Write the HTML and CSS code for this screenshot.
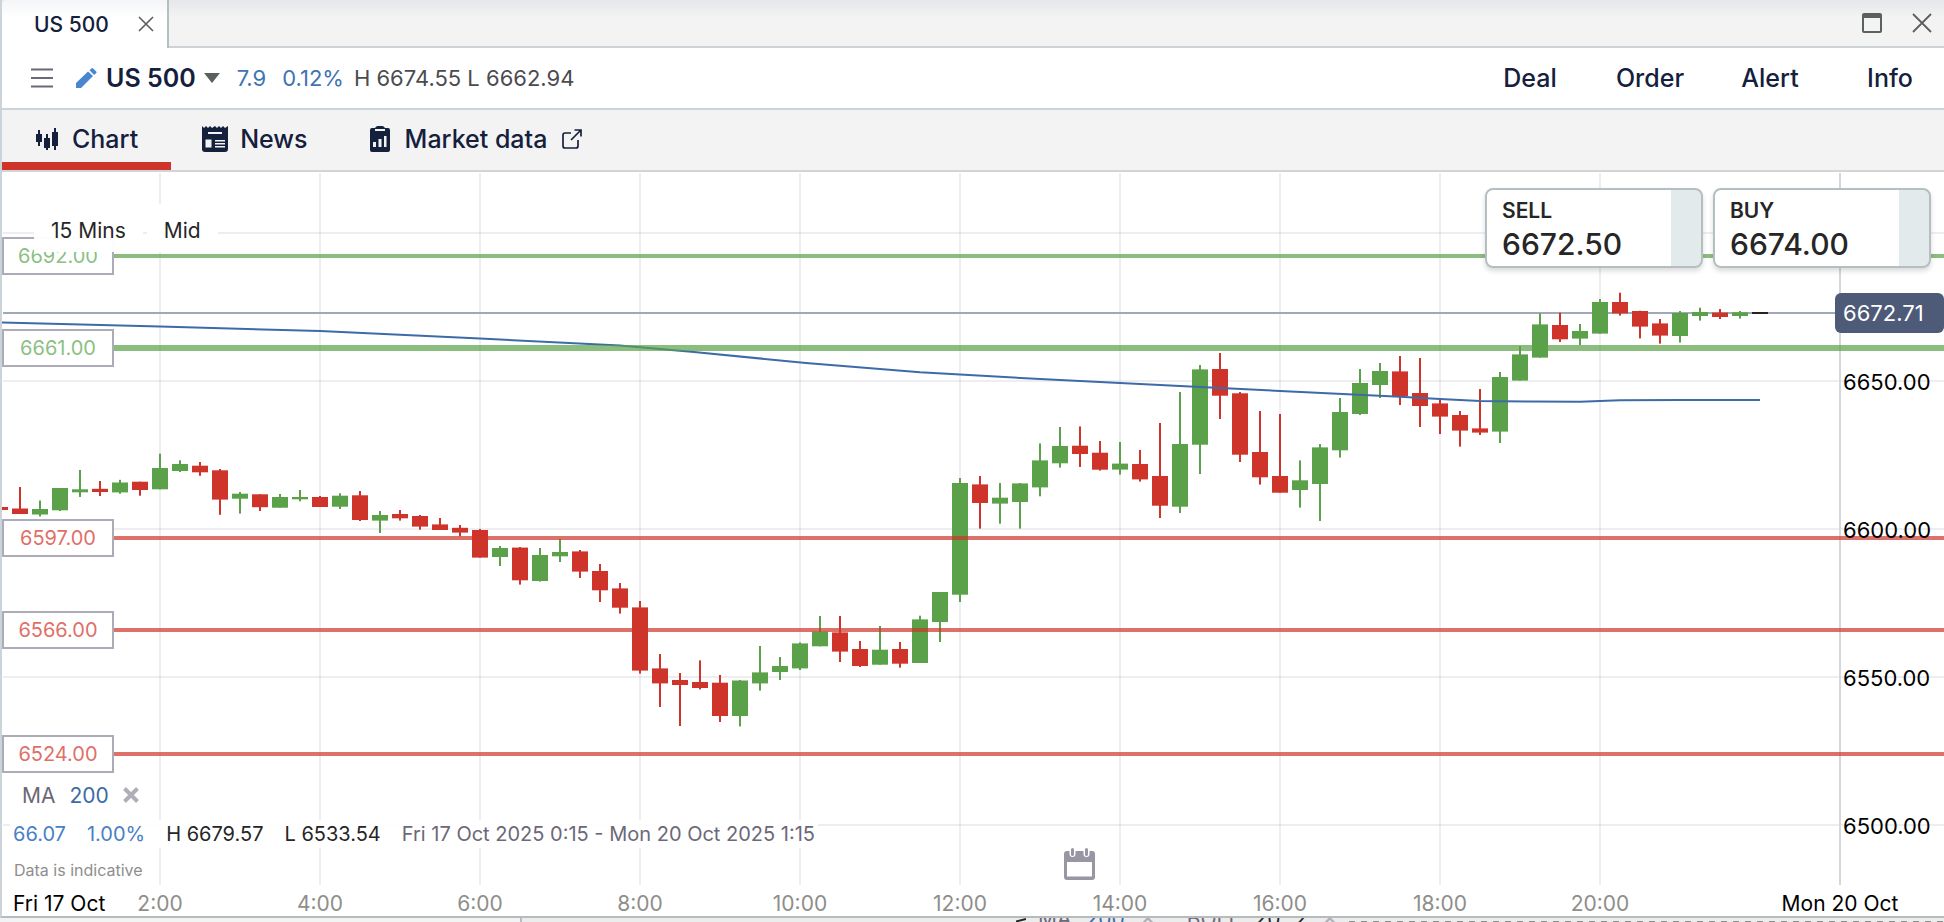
FILE: index.html
```html
<!DOCTYPE html>
<html lang="en">
<head>
    <meta charset="UTF-8">
    <meta name="viewport" content="width=device-width, initial-scale=1.0">
    <title>US 500</title>
    <link rel="stylesheet" href="styles.css">
</head>
<body>
    <div class="window">
        <!-- Window tabs -->
        <div class="titlebar">
            <div class="window-tab">
                <span>US 500</span>
                <button type="button" class="icon-btn" aria-label="Close tab">
                    <svg width="16" height="16" viewBox="0 0 16 16"><path d="M1 1L15 15M15 1L1 15" stroke="#5b5f5e" stroke-width="1.6"/></svg>
                </button>
            </div>
            <div class="window-controls">
                <button type="button" class="icon-btn" aria-label="Maximise">
                    <svg width="20" height="20" viewBox="0 0 20 20"><rect x="1" y="1" width="18" height="18" rx="1" fill="none" stroke="#5b5f5e" stroke-width="2"/><path d="M1 1h18v4H1z" fill="#5b5f5e"/></svg>
                </button>
                <button type="button" class="icon-btn" aria-label="Close window">
                    <svg width="20" height="20" viewBox="0 0 20 20"><path d="M1 1L19 19M19 1L1 19" stroke="#5b5f5e" stroke-width="1.8"/></svg>
                </button>
            </div>
        </div>

        <!-- Market header -->
        <header class="header">
            <button type="button" class="icon-btn menu" aria-label="Menu">
                <svg width="22" height="20" viewBox="0 0 22 20"><path d="M0 1.5h22M0 10h22M0 18.5h22" stroke="#6c6877" stroke-width="2"/></svg>
            </button>
            <button type="button" class="icon-btn pencil" aria-label="Edit">
                <svg width="21" height="20" viewBox="0 0 21 20"><path d="M0 20v-5L12 3.500l5 4.500L5 20zM13.500 2.200L15.500.4q.8-.7 1.700.1l3 2.900q.8.9 0 1.700L18.200 7z" fill="#4a86cf"/></svg>
            </button>
            <button type="button" class="market">US 500
                <svg width="16" height="10" viewBox="0 0 16 10"><path d="M0 0h16L8 10z" fill="#5b5f5e"/></svg>
            </button>
            <span class="change">7.9</span>
            <span class="change">0.12%</span>
            <span class="range">H 6674.55 L 6662.94</span>
            <nav class="actions">
                <button type="button">Deal</button>
                <button type="button">Order</button>
                <button type="button">Alert</button>
                <button type="button">Info</button>
            </nav>
        </header>

        <!-- Sections -->
        <nav class="tabs">
            <a href="#chart" class="tab active">
                <svg width="22" height="22" viewBox="0 0 22 22" fill="#14203c"><path d="M0 6h2V2h2v4h2v8H4v4H2v-4H0zM8 10h2V6h2v4h2v10h-2v2h-2v-2H8zM16 4h2V0h2v4h2v14h-2v4h-2v-4h-2z"/></svg>
                Chart
            </a>
            <a href="#news" class="tab news">
                <svg width="26" height="26" viewBox="0 0 26 26"><path d="M0 0l2 2 2-2 2 2 2-2 2 2 3-2 2 2 2-2 2 2 2-2 2 2 3-2v23q0 3-3 3H3q-3 0-3-3z" fill="#14203c"/><path d="M6 6h14v2H6zM3.500 13.500h6v8h-6zM13 14h10v1.500H13zM13 17h10v1.500H13zM13 20h10v1.500H13z" fill="#f3f3f3"/></svg>
                News
            </a>
            <a href="#market-data" class="tab data">
                <svg width="20" height="26" viewBox="0 0 20 26"><path d="M2 2h3q1-2 3-2h4q2 0 3 2h3q2 0 2 2v20q0 2-2 2H2q-2 0-2-2V4q0-2 2-2z" fill="#14203c"/><path d="M5 3h10v2H5zM3 16h3v5H3zM8.500 13h3v8h-3zM14 10h2.500v11H14z" fill="#f3f3f3"/></svg>
                Market data
                <svg width="20" height="20" viewBox="0 0 20 20"><path d="M9 4H3Q1 4 1 6v11q0 2 2 2h11q2 0 2-2v-6M12.500 1H19v6.500M19 1L9 11" fill="none" stroke="#14203c" stroke-width="1.700"/></svg>
            </a>
        </nav>

        <!-- Chart -->
        <main class="chart" id="chart">
            <svg class="plot" id="plot" viewBox="2 173 1942 712" preserveAspectRatio="none"></svg>
            <div class="labels" id="labels"></div>

            <div class="settings">
                <button type="button">15 Mins</button>
                <button type="button">Mid</button>
            </div>

            <div class="tickets">
                <button type="button" class="ticket"><b>SELL</b><span>6672.50</span></button>
                <button type="button" class="ticket"><b>BUY</b><span>6674.00</span></button>
            </div>

            <div class="legend">
                <div class="study">
                    <span>MA</span>
                    <span class="period">200</span>
                    <button type="button" class="icon-btn" aria-label="Remove MA">
                        <svg width="16" height="16" viewBox="0 0 16 16"><path d="M1.500 1.500L14.500 14.500M14.500 1.500L1.500 14.500" stroke="#b0afb9" stroke-width="4"/></svg>
                    </button>
                </div>
                <div class="stats">
                    <span class="blue">66.07</span>
                    <span class="blue">1.00%</span>
                    <span>H 6679.57</span>
                    <span>L 6533.54</span>
                    <span class="dates">Fri 17 Oct 2025 0:15 - Mon 20 Oct 2025 1:15</span>
                </div>
                <small class="note">Data is indicative</small>
            </div>

            <button type="button" class="icon-btn calendar" aria-label="Pick a date">
                <svg width="31" height="32" viewBox="0 0 31 32"><path d="M3 3h25q3 0 3 3v23q0 3-3 3H3q-3 0-3-3V6q0-3 3-3z" fill="#9896a3"/><path d="M3 14h25v14.500H3z" fill="#fff"/><path d="M8.500 0v6M22.500 0v6" stroke="#fff" stroke-width="6" stroke-linecap="round"/><path d="M8.500 1.500v5M22.500 1.500v5" stroke="#9896a3" stroke-width="3" stroke-linecap="round"/></svg>
            </button>
        </main>

        <div class="time-axis" id="time-axis">
            <span class="day first">Fri 17 Oct</span>
        </div>
    </div>

    <!-- Top edge of the window underneath -->
    <div class="behind">
        <div class="behind-tab"></div>
        <svg class="behind-arrow" width="10" height="4" viewBox="0 0 10 4"><path d="M0 3.500L10 1" stroke="#262626" stroke-width="2"/></svg>
        <div class="behind-studies">
            <span>MA</span><span class="period">200</span><span class="cross">✕</span>
            <span>BOLL</span><span class="dark">20</span><span class="dark">2</span><span class="cross">✕</span>
        </div>
        <div class="behind-line"></div>
    </div>

    <script src="chart.js"></script>
</body>
</html>
```

FILE: styles.css
```css
* {
    box-sizing: border-box;
}
body {
    margin: 0;
    height: 100vh;
    display: flex;
    flex-direction: column;
    overflow: hidden;
    background-color: #ececec;
    color: #14203c;
    font-family: Inter, "Liberation Sans", sans-serif;
    font-size: 21px;
}
button {
    font: inherit;
    color: inherit;
    background: none;
    border: 0;
    padding: 0;
    cursor: pointer;
}
svg {
    display: block;
}
.icon-btn {
    display: flex;
    flex-shrink: 0;
}
.window {
    flex: 1;
    min-height: 0;
    display: flex;
    flex-direction: column;
    background-color: white;
    border-left: 2px solid #cdd4d9;
    border-bottom: 2px solid #b5bcc0;
}

/* Title bar */
.titlebar {
    display: flex;
    justify-content: space-between;
    height: 48px;
    background: linear-gradient(#e6e7ea, #f3f3f3 18px);
    border-bottom: 2px solid #cdd2d7;
}
.window-tab {
    display: flex;
    align-items: center;
    gap: 29px;
    height: 48px;
    padding: 0 13px 0 32px;
    background: linear-gradient(#f4f5f6, white 18px);
    border-right: 2px solid #b5bec0;
    border-top-left-radius: 4px;
    font-weight: 500;
}
.window-controls {
    display: flex;
    align-items: center;
    gap: 30px;
    padding-right: 12px;
}

/* Header */
.header {
    display: flex;
    align-items: center;
    height: 62px;
    padding-left: 29px;
    border-bottom: 2px solid #cdd4d9;
    font-size: 22px;
    white-space: nowrap;
}
.pencil {
    margin: 0 9px 0 23px;
}
.market {
    display: flex;
    align-items: center;
    gap: 8px;
    margin-right: 17px;
    font-size: 25px;
    font-weight: 600;
}
.change {
    margin-right: 16px;
    color: #4173b3;
}
.change + .change {
    margin-right: 10px;
}
.range {
    color: #4b4b50;
}
.actions {
    display: flex;
    margin-left: auto;
    font-size: 25px;
    font-weight: 500;
}
.actions button {
    width: 120px;
}
.actions button:last-child {
    width: 114px;
    padding-left: 6px;
}

/* Tabs */
.tabs {
    display: flex;
    height: 62px;
    background-color: #f3f3f3;
    border-bottom: 2px solid #d3d4da;
    font-size: 25px;
    font-weight: 500;
    white-space: nowrap;
}
.tab {
    display: flex;
    align-items: center;
    gap: 14px;
    padding: 0 31px;
    border-bottom: 8px solid transparent;
    border-top: 6px solid transparent;
    color: inherit;
    text-decoration: none;
}
.tab.active {
    border-bottom-color: #cf342b;
    padding: 0 33px 0 34px;
}
.tab.news {
    gap: 12px;
}
.tab.data {
    gap: 15px;
}

/* Chart */
.chart {
    position: relative;
    flex: 1;
    min-height: 0;
    margin-top: 1px;
}
.plot {
    width: 100%;
    height: 100%;
    position: absolute;
}
.grid {
    fill: #7b7d90;
    fill-opacity: 0.13;
}
.up {
    fill: #5aa149;
}
.down {
    fill: #cf342b;
}
.flat {
    fill: #222;
}
.level-up {
    fill: #5aa149;
    opacity: 0.7;
}
.level-down {
    fill: #cf342b;
    opacity: 0.7;
}
.average {
    fill: none;
    stroke: #3c6ba8;
    stroke-width: 2;
}
.labels {
    position: absolute;
    inset: 0;
}
.price {
    position: absolute;
    right: 0;
    width: 101px;
    transform: translateY(-50%);
    color: black;
    font-size: 22px;
    line-height: 24px;
}
.price.current {
    width: 109px;
    padding-left: 8px;
    line-height: 40px;
    background-color: #4d5b78;
    border-radius: 6px;
    color: white;
}
.level {
    position: absolute;
    left: 0;
    width: 112px;
    transform: translateY(-50%);
    background-color: rgba(255, 255, 255, 0.95);
    border: 2px solid #acabb7;
    color: #8bc084;
    font-size: 20px;
    line-height: 34px;
    text-align: center;
}
.level.red {
    color: #df6f68;
}
.settings {
    position: absolute;
    left: 32px;
    top: 31px;
    display: flex;
    gap: 4px;
    color: #262626;
}
.settings button {
    height: 48px;
    padding: 4px 17px 0;
    background-color: rgba(255, 255, 255, 0.96);
}
.tickets {
    position: absolute;
    top: 15px;
    right: 13px;
    display: flex;
    gap: 10px;
}
.ticket {
    width: 218px;
    height: 80px;
    padding: 2px 15px 0;
    display: flex;
    flex-direction: column;
    justify-content: center;
    align-items: flex-start;
    background: linear-gradient(to left, #e3eaec 30px, white 30px);
    border: 2px solid #b5bec0;
    border-radius: 8px;
    box-shadow: 0 3px 5px rgba(0, 0, 0, 0.15);
    color: #262626;
    font-size: 30px;
    font-weight: 500;
    line-height: 36px;
}
.ticket b {
    font-size: 21px;
    font-weight: 600;
    line-height: 30px;
}
.legend {
    position: absolute;
    left: 8px;
    bottom: 3px;
    white-space: nowrap;
}
.study {
    display: inline-flex;
    align-items: center;
    gap: 14px;
    height: 36px;
    padding-left: 12px;
    color: #6c6877;
}
.period {
    color: #3c6ba8;
}
.stats {
    display: flex;
    gap: 21px;
    margin-top: 7px;
    padding: 0 3px;
    background-color: rgba(255, 255, 255, 0.9);
    color: #262626;
    font-size: 20px;
    line-height: 28px;
}
.blue {
    color: #4a80c4;
}
.dates {
    color: #6c6877;
}
.note {
    display: block;
    margin-top: 10px;
    padding-left: 4px;
    color: #8e8e8e;
    font-size: 16px;
    line-height: 24px;
}
.calendar {
    position: absolute;
    left: 1062px;
    bottom: 5px;
}
.time-axis {
    position: relative;
    height: 31px;
    color: #8e8e8a;
    line-height: 38px;
    white-space: nowrap;
}
.time-axis span {
    position: absolute;
    transform: translateX(-50%);
}
.time-axis .day {
    color: black;
}
.time-axis .first {
    left: 11px;
    transform: none;
}

/* Window underneath */
.behind {
    display: flex;
    align-items: flex-end;
    height: 4px;
    overflow: hidden;
    color: #6c6877;
    line-height: 20px;
}
.behind-tab {
    width: 522px;
    height: 4px;
    margin-right: 494px;
    border-right: 2px solid #b5bec0;
    background-color: #f3f3f3;
}
.behind-arrow {
    margin-right: 12px;
}
.behind-studies {
    display: flex;
    gap: 14px;
    height: 13px;
}
.behind-studies .dark {
    color: #262626;
}
.behind-studies .cross {
    color: #b0afb9;
}
.behind-studies .cross + span {
    margin-left: 16px;
}
.behind-line {
    flex: 1;
    height: 1px;
    margin-left: 10px;
    background: repeating-linear-gradient(to right, #8e8e8e 0 6px, transparent 6px 12px);
}
```

FILE: chart.js
```js
// 15 minute candles: [wick top, body top, body bottom, wick bottom, type]
const candles = [
    [507, 507, 510, 510, 'down'], [487, 508.5, 514, 514, 'down'], [500.5, 509, 514.5, 516.5, 'up'], [488, 488, 510.3, 511, 'up'],
    [470, 489.3, 492.3, 497, 'up'], [481, 488.8, 492, 496, 'down'], [479.8, 482.5, 492.4, 493.8, 'up'], [481.7, 481.7, 490, 495.7, 'down'],
    [453.7, 468, 489.3, 489.3, 'up'], [460.3, 464, 471, 472, 'up'], [462, 465.7, 472.3, 475.8, 'down'], [469, 470.3, 499.6, 514.8, 'down'],
    [492, 493.7, 498.7, 513.6, 'up'], [494.3, 494.3, 507.2, 511, 'down'], [494, 497, 507.7, 507.7, 'up'], [490, 497, 499.3, 501.3, 'up'],
    [496, 497, 507, 507, 'down'], [493.3, 495.7, 506.7, 509, 'up'], [491, 495.3, 520, 521, 'down'], [511, 515, 520.6, 533, 'up'],
    [510, 514, 518.3, 520.6, 'down'], [515, 516, 526.6, 529.7, 'down'], [518, 524.4, 530, 530, 'down'], [525, 527.8, 532.6, 536.3, 'down'],
    [529, 530, 557.6, 557.6, 'down'], [546, 548, 557, 566, 'up'], [547, 547.6, 580.3, 584.6, 'down'], [548, 555, 581, 581.6, 'up'],
    [539, 552, 556.3, 562, 'up'], [550, 551.4, 571.6, 578, 'down'], [564, 571, 590.3, 602, 'down'], [583, 588.4, 607.7, 613.6, 'down'],
    [601, 607.4, 670.6, 673.6, 'down'], [654, 668.4, 683.4, 707, 'down'], [673, 680, 685, 726, 'down'], [660.4, 682, 688, 689.4, 'down'],
    [675, 682.7, 716, 722, 'down'], [680, 680.5, 716, 726.4, 'up'], [646, 672.4, 683.4, 690.6, 'up'], [657, 666, 672, 680, 'up'],
    [642.4, 643.4, 668.4, 670, 'up'], [616, 631.6, 646.3, 646.3, 'up'], [616, 632.4, 651.6, 662, 'down'], [641, 649, 666, 667, 'down'],
    [626, 649.7, 664.7, 664.7, 'up'], [642, 649, 663.7, 667.6, 'down'], [615.7, 619.4, 663, 663, 'up'], [592, 592, 622, 642, 'up'],
    [478, 483, 594.7, 602, 'up'], [476, 484.4, 503, 528.6, 'down'], [483, 497.7, 503.6, 523.7, 'up'], [483, 483.4, 502, 528.6, 'up'],
    [443.4, 460.4, 487.4, 496.3, 'up'], [427, 446, 463.3, 467.6, 'up'], [426.4, 445.7, 454, 467, 'down'], [441, 452.7, 469.7, 470.6, 'down'],
    [442, 463.6, 469.6, 474.6, 'up'], [450, 464, 479.4, 481.6, 'down'], [423, 476, 505.7, 518, 'down'], [392, 444, 506.7, 513, 'up'],
    [365, 369.4, 444.7, 474, 'up'], [353, 369, 395.7, 419, 'down'], [392, 393.3, 454.7, 462, 'down'], [411, 452, 477.3, 484.6, 'down'],
    [414, 476, 492.7, 492.7, 'down'], [460.4, 480.3, 490, 507.6, 'up'], [444, 447.4, 484, 521, 'up'], [398, 412, 450.3, 457.6, 'up'],
    [369, 383, 414, 415, 'up'], [363, 371, 385, 398, 'up'], [356, 371.4, 396, 405, 'down'], [358, 393, 406, 427, 'down'],
    [400, 403.4, 416.6, 434, 'down'], [411, 415, 430.6, 446.6, 'down'], [389, 428.4, 432.6, 435, 'down'], [372, 377, 431.6, 443, 'up'],
    [346, 354.4, 380.6, 380.6, 'up'], [313.4, 324.4, 357.6, 357.6, 'up'], [312.7, 325, 339.3, 342, 'down'], [324, 331, 338.6, 345, 'up'],
    [299, 302, 333.6, 333.6, 'up'], [292.7, 302, 313.4, 315.6, 'down'], [310.7, 311, 326.6, 338.4, 'down'], [319, 323.4, 335.6, 343.6, 'down'],
    [311, 313, 336, 342.6, 'up'], [307.7, 312, 316, 320.6, 'up'], [309, 312.6, 317, 319, 'down'], [311, 312.3, 316, 318.6, 'up'],
    [312, 312, 314, 314, 'flat']
];
const average = [
    [2, 322.5], [160, 326.5], [320, 331], [480, 338.5], [620, 345.5], [694, 352], [806, 363], [920, 372.3], [1040, 379], [1120, 383],
    [1200, 387], [1280, 391], [1400, 396.7], [1440, 399], [1480, 401], [1530, 401.6], [1580, 401.8], [1620, 400.3], [1680, 400], [1760, 400]
];
const levels = [
    { text: '6692.00', y: 256, size: 4, up: true },
    { text: '6661.00', y: 348, size: 6, up: true },
    { text: '6597.00', y: 538, size: 4 },
    { text: '6566.00', y: 630, size: 4 },
    { text: '6524.00', y: 754, size: 4 }
];
const prices = [[382, '6650.00'], [530, '6600.00'], [678, '6550.00'], [826, '6500.00']];

const plot = document.getElementById('plot');
const labels = document.getElementById('labels');
const timeAxis = document.getElementById('time-axis');

function rect(x, y, width, height, name) {
    return `<rect x="${x}" y="${y}" width="${width}" height="${height}" class="${name}"/>`;
}

function addLabel(parent, text, name, side, value) {
    const span = document.createElement('span');
    span.className = name;
    span.textContent = text;
    span.style[side] = value + '%';
    parent.appendChild(span);
}

function percentY(y) {
    return (y - 173) / 712 * 100;
}

let shapes = '';

// Grid
[233, 381, 529, 677, 825].forEach(y => shapes += rect(3, y - 1, 1941, 2, 'grid'));
for (let hour = 2; hour <= 20; hour += 2) {
    shapes += rect(hour * 80 - 1, 173, 2, 712, 'grid');
    addLabel(timeAxis, hour + ':00', 'time', 'left', (hour * 80 - 2) / 1942 * 100);
}
addLabel(timeAxis, 'Mon 20 Oct', 'day', 'left', 1838 / 1942 * 100);
shapes += '<rect x="1839" y="173" width="2" height="712" fill="#d5d7dd"/>';

// Current price
shapes += '<rect x="3" y="312" width="1840" height="2" fill="#a0a9b8"/>';

candles.forEach(([high, top, bottom, low, type], i) => {
    shapes += rect(i * 20 - 1, high, 2, low - high, type);
    shapes += rect(i * 20 - 8, top, 16, bottom - top, type);
});
shapes += `<polyline class="average" points="${average.join(' ')}"/>`;

levels.forEach(level => {
    shapes += rect(114, level.y - level.size / 2, 1830, level.size, level.up ? 'level-up' : 'level-down');
    addLabel(labels, level.text, level.up ? 'level' : 'level red', 'top', percentY(level.y));
});
prices.forEach(([y, text]) => addLabel(labels, text, 'price', 'top', percentY(y)));
addLabel(labels, '6672.71', 'price current', 'top', percentY(313));

plot.innerHTML = shapes;
```
